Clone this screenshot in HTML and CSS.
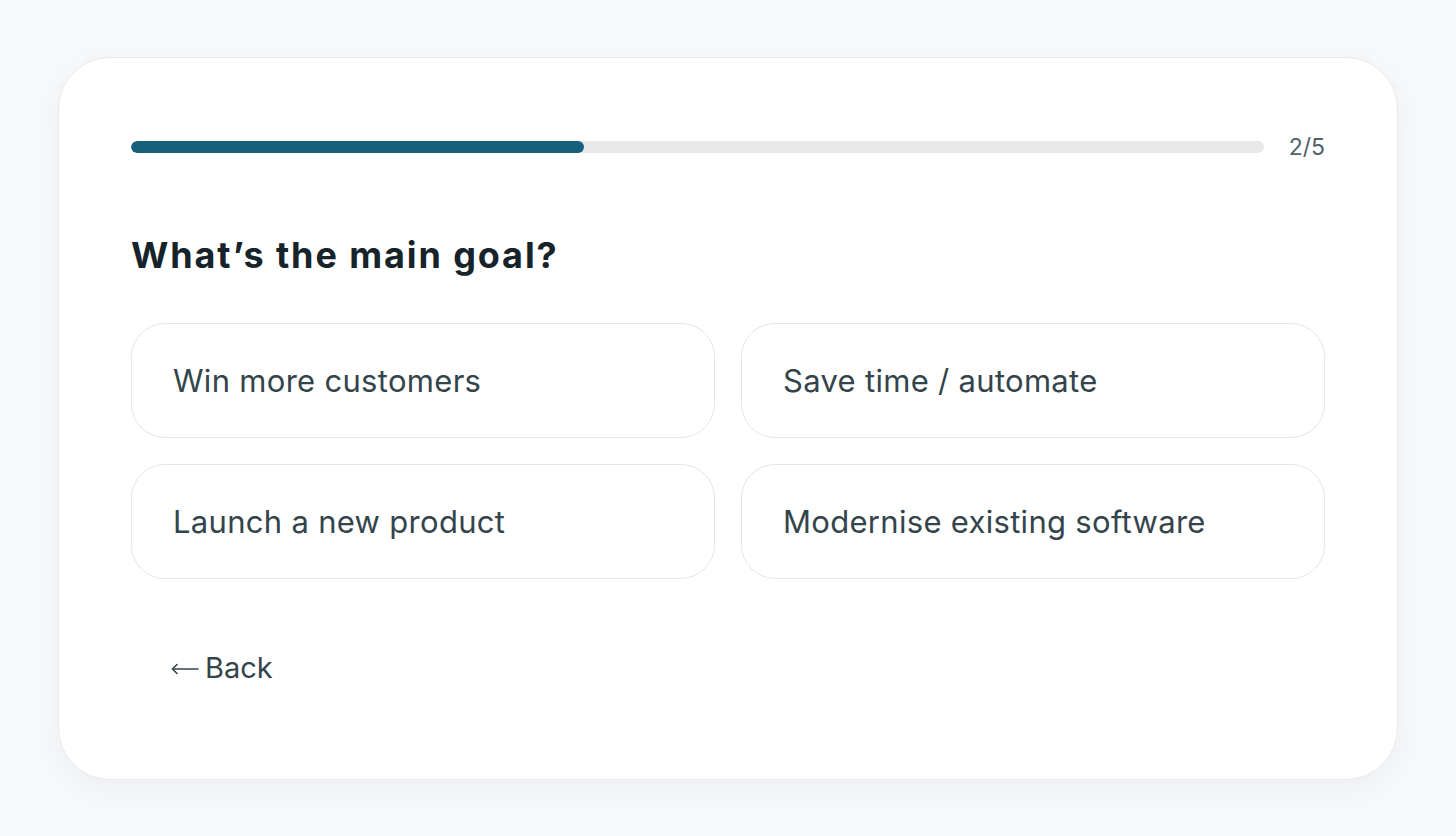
FILE: index.html
```html
<!DOCTYPE html>
<html lang="en">
<head>
    <meta charset="UTF-8">
    <meta name="viewport" content="width=device-width, initial-scale=1.0">
    <title>What's the main goal?</title>
    <link rel="stylesheet" href="styles.css">
</head>
<body>

<div class="card">
    <!-- Progress -->
    <div class="progress">
        <div class="progress-track">
            <div class="progress-fill"></div>
        </div>
        <span class="progress-label">2/5</span>
    </div>

    <h2 class="question">What’s the main goal?</h2>

    <!-- Answers -->
    <div class="options">
        <button class="option">Win more customers</button>
        <button class="option">Save time / automate</button>
        <button class="option">Launch a new product</button>
        <button class="option">Modernise existing software</button>
    </div>

    <button class="back-btn">
        <svg class="arrow" width="28" height="14" viewBox="0 0 28 14" fill="none" stroke="currentColor" stroke-width="1.6" stroke-linecap="round" stroke-linejoin="round">
            <path d="M27 7H1.5"/>
            <path d="M6 2.5L1.5 7L6 11.5"/>
        </svg>
        Back
    </button>
</div>

</body>
</html>
```

FILE: styles.css
```css
body {
    margin: 0;
    padding: 0;
    min-height: 100vh;
    background-color: #f7f8fa;
    font-family: 'Inter', 'Liberation Sans', sans-serif;
    display: flex;
    align-items: center;
    justify-content: center;
}

.card {
    width: 1340px;
    box-sizing: border-box;
    background: #fff;
    border: 1.5px solid #e8e9ea;
    border-radius: 52px;
    padding: 77px 72px 78px 72px;
    box-shadow: 0 8px 30px rgba(20, 30, 40, 0.04);
}

/* Progress bar */
.progress {
    display: flex;
    align-items: center;
    gap: 25px;
}

.progress-track {
    flex: 1;
    height: 12px;
    background: #e8e8e8;
    border-radius: 6px;
    overflow: hidden;
}

.progress-fill {
    width: 40%;
    height: 100%;
    background: #17607c;
    border-radius: 6px;
}

.progress-label {
    font-size: 23px;
    line-height: 24px;
    color: #4f626c;
}

.question {
    margin: 74px 0 0 0;
    font-size: 36px;
    line-height: 44px;
    font-weight: 700;
    color: #16232b;
    letter-spacing: 1.9px;
}

/* Answer grid */
.options {
    margin-top: 46px;
    display: grid;
    grid-template-columns: 1fr 1fr;
    gap: 26px;
}

.option {
    height: 115px;
    box-sizing: border-box;
    background: #fff;
    border: 1.5px solid #e4e5e6;
    border-radius: 34px;
    padding: 0 0 0 41px;
    text-align: left;
    font-family: inherit;
    font-size: 31px;
    letter-spacing: 0.3px;
    color: #34444b;
    cursor: pointer;
}

.back-btn {
    margin-top: 56px;
    background: none;
    border: none;
    padding: 16px 40px;
    display: flex;
    align-items: center;
    gap: 6px;
    font-family: inherit;
    font-size: 29px;
    line-height: 34px;
    color: #34444b;
    cursor: pointer;
}

.back-btn .arrow {
    margin-top: 3px;
}
```
